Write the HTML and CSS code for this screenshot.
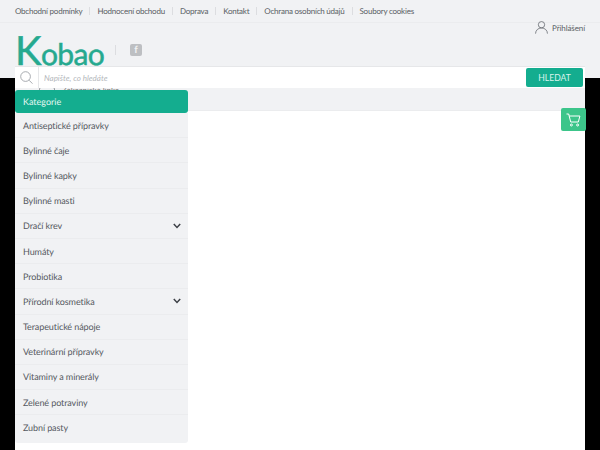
FILE: index.html
```html
<!DOCTYPE html>
<html lang="cs">
<head>
    <meta charset="UTF-8">
    <title>Kobao</title>
    <link rel="stylesheet" href="styles.css">
</head>
<body>

<header class="site-header">
    <div class="top-bar">
        <nav class="top-nav">
            <a href="#">Obchodní podmínky</a>
            <a href="#">Hodnocení obchodu</a>
            <a href="#">Doprava</a>
            <a href="#">Kontakt</a>
            <a href="#">Ochrana osobních údajů</a>
            <a href="#">Soubory cookies</a>
        </nav>
    </div>
    <a class="login" href="#">
        <svg width="13" height="13" viewBox="0 0 14 14" fill="none" stroke="#6b6f75" stroke-width="0.9">
            <circle cx="7" cy="4" r="3.4"/>
            <path d="M0.6 13.6c0-3.6 2.8-6.1 6.4-6.1s6.4 2.5 6.4 6.1"/>
        </svg>
        <span>Přihlášení</span>
    </a>
    <div class="logo-row">
        <a class="logo" href="#"><span class="logo-k">K</span>obao</a>
        <span class="logo-sep"></span>
        <span class="fb-icon">f</span>
    </div>
</header>

<div class="wrap">
    <form class="search">
        <span class="search-icon">
            <svg width="13" height="13" viewBox="0 0 15 15" fill="none" stroke="#9a9ea3" stroke-width="1">
                <circle cx="6.4" cy="6.4" r="5.6"/>
                <path d="M10.4 10.6l4 4"/>
            </svg>
        </span>
        <input class="search-input" type="text" placeholder="Napište, co hledáte">
        <button class="search-btn" type="button">HLEDAT</button>
    </form>

    <div class="strip">
        <span class="strip-icon"></span>
        <span class="strip-text">Zákaznická linka</span>
    </div>

    <div class="content"></div>

    <aside class="menu">
        <div class="menu-title">Kategorie</div>
        <ul class="menu-list">
            <li>Antiseptické přípravky</li>
            <li>Bylinné čaje</li>
            <li>Bylinné kapky</li>
            <li>Bylinné masti</li>
            <li class="has-sub">Dračí krev
                <svg width="8" height="6" viewBox="0 0 8 6" fill="none" stroke="#3c4046" stroke-width="1.5"><path d="M0.8 1l3.2 3.4L7.2 1"/></svg>
            </li>
            <li>Humáty</li>
            <li>Probiotika</li>
            <li class="has-sub">Přírodní kosmetika
                <svg width="8" height="6" viewBox="0 0 8 6" fill="none" stroke="#3c4046" stroke-width="1.5"><path d="M0.8 1l3.2 3.4L7.2 1"/></svg>
            </li>
            <li>Terapeutické nápoje</li>
            <li>Veterinární přípravky</li>
            <li>Vitaminy a minerály</li>
            <li>Zelené potraviny</li>
            <li>Zubní pasty</li>
        </ul>
    </aside>

    <a class="cart" href="#">
        <svg width="15" height="14" viewBox="0 0 15 14" fill="none" stroke="#fff" stroke-width="1">
            <path d="M0.5 1h2.2l2 8h7.6l1.6-6H3.4"/>
            <circle cx="5.4" cy="12" r="1"/>
            <circle cx="11.6" cy="12" r="1"/>
        </svg>
    </a>
</div>

</body>
</html>
```

FILE: styles.css
```css
* {
    box-sizing: border-box;
}
html, body {
    height: 450px;
    overflow: hidden;
}
body {
    margin: 0;
    background-color: #000;
    font-family: 'Lato', sans-serif;
    color: #55595f;
    text-rendering: geometricPrecision;
}
a {
    color: inherit;
    text-decoration: none;
}
.site-header {
    position: relative;
    height: 78px;
    background-color: #f1f2f4;
}
.top-bar {
    height: 23px;
    padding: 0 15px;
    border-bottom: 1px solid #ebecee;
}
.top-nav {
    display: flex;
    align-items: center;
    height: 22px;
    font-size: 8px;
    letter-spacing: -0.22px;
    color: #5b5f65;
}
.top-nav a {
    padding-right: 7px;
    margin-right: 7px;
    border-right: 1px solid #dcdde0;
    line-height: 8px;
}
.top-nav a:last-child {
    border-right: none;
}
.login {
    position: absolute;
    top: 21px;
    right: 15px;
    display: flex;
    align-items: center;
    gap: 4px;
    font-size: 8px;
    letter-spacing: -0.1px;
    color: #5b5f65;
}
.logo-row {
    display: flex;
    align-items: center;
    height: 43px;
    padding: 11px 0 0 15px;
}
.logo {
    position: relative;
    z-index: 1;
    width: 100px;
    margin-top: 5px;
    color: #25a98f;
    font-size: 30px;
    line-height: 43px;
    letter-spacing: -0.6px;
    -webkit-text-stroke: 0.5px #25a98f;
}
.logo-k {
    font-size: 40px;
}
.logo-sep {
    width: 1px;
    height: 10px;
    background-color: #dcdde0;
    margin-right: 14px;
}
.fb-icon {
    width: 12px;
    height: 12px;
    border-radius: 2px;
    background-color: #bdbfc2;
    color: #f1f2f4;
    font-size: 10px;
    font-weight: 700;
    line-height: 13px;
    text-align: center;
}
.wrap {
    position: relative;
    width: 570px;
    height: 384px;
    margin: -12px auto 0;
}
.search {
    display: flex;
    align-items: center;
    height: 22px;
    background-color: #fff;
    border-top: 1px solid #e6e7e9;
    padding-right: 2px;
}
.search-icon {
    display: flex;
    align-items: center;
    justify-content: center;
    width: 24px;
    height: 21px;
    border-right: 1px solid #e6e7e9;
}
.search-input {
    flex: 1;
    min-width: 0;
    border: none;
    outline: none;
    padding: 0 5px;
    font-family: inherit;
    font-size: 8px;
    font-style: italic;
    background: transparent;
}
.search-input::placeholder {
    color: #b4b7bb;
}
.search-btn {
    width: 57px;
    height: 19px;
    border: none;
    border-radius: 2px;
    background-color: #14ad8f;
    color: #d8f3ec;
    font-family: inherit;
    font-size: 8.6px;
}
.strip {
    display: flex;
    height: 23px;
    padding-left: 24px;
    background-color: #f1f2f4;
    overflow: hidden;
    font-size: 8px;
    border-bottom: 1px solid #ebecee;
}
.strip-icon {
    width: 16px;
    height: 8px;
    border: 1px solid #9a9ea3;
    border-radius: 2px;
    margin-top: -1px;
}
.strip-text {
    margin: -3px 0 0 7px;
    color: #777;
}
.content {
    height: 339px;
    background-color: #fff;
}
.menu {
    position: absolute;
    top: 24px;
    left: 0;
    width: 173px;
}
.menu-title {
    height: 23px;
    padding-left: 8px;
    border-radius: 3px;
    background-color: #14ad8f;
    color: #e4f7f2;
    font-size: 9px;
    line-height: 23px;
}
.menu-list {
    margin: 0;
    padding: 0 0 3px;
    list-style: none;
    background-color: #f1f2f4;
    border-radius: 0 0 3px 3px;
    font-size: 9px;
    letter-spacing: -0.1px;
}
.menu-list li {
    display: flex;
    align-items: center;
    justify-content: space-between;
    height: 25.2px;
    padding: 0 7px 0 8px;
    border-bottom: 1px solid #ebecee;
}
.menu-list li:last-child {
    border-bottom: none;
}
.cart {
    position: absolute;
    top: 42px;
    right: -1px;
    display: flex;
    align-items: center;
    justify-content: center;
    width: 25px;
    height: 23px;
    border-radius: 2px;
    background-color: #3cc58a;
}
```
